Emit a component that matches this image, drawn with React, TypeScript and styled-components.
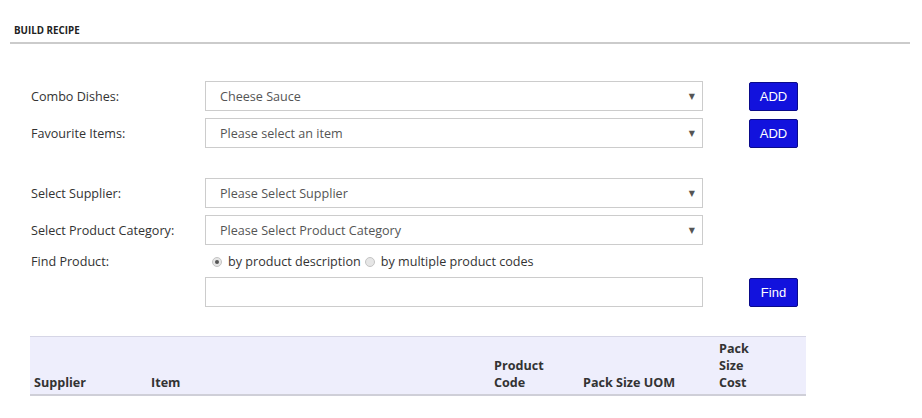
import React from 'react';
import styled, { createGlobalStyle } from 'styled-components';

const GlobalStyle = createGlobalStyle`
  body {
    margin: 0;
    background: #fff;
    font-family: "Open Sans", "Liberation Sans", sans-serif;
    color: #333;
  }
`

const Page = styled.div`
  width: 922px;
  height: 418px;
  overflow: hidden;
  padding-top: 23px;
  box-sizing: border-box;
`

const SectionHeader = styled.div`
  margin: 0 12px 0 10px;
  padding: 0 0 4px 4px;
  border-bottom: 2px solid #cbcbcb;
  font-size: 9.8px;
  font-weight: 700;
  line-height: 15px;
  color: #222;
`

const Form = styled.div`
  padding: 37px 0 0 31px;
`

const Row = styled.div<{ $gapTop?: number }>`
  display: flex;
  align-items: center;
  margin-top: ${(p) => p.$gapTop ?? 7}px;
`

const Label = styled.div`
  width: 174px;
  font-size: 12.6px;
  color: #333;
`

const SelectBox = styled.div`
  width: 498px;
  height: 30px;
  box-sizing: border-box;
  border: 1px solid #ccc;
  display: flex;
  align-items: center;
  justify-content: space-between;
  padding: 0 7px 0 14px;
  font-size: 12.6px;
  color: #555;
`

const Arrow = styled.span`
  font-size: 8px;
  color: #555;
  font-family: "DejaVu Sans", sans-serif;
`

const TextBox = styled.input`
  width: 498px;
  height: 30px;
  box-sizing: border-box;
  border: 1px solid #ccc;
  padding: 0 14px;
  font-size: 12.6px;
  font-family: inherit;
  outline: none;
`

const Button = styled.button`
  margin-left: 46px;
  width: 49px;
  height: 29px;
  box-sizing: border-box;
  background: #1212dd;
  border: 1px solid #0a0a8a;
  border-radius: 2px;
  color: #fff;
  font-family: "Liberation Sans", Arial, sans-serif;
  font-size: 13px;
  padding: 0;
`

const RadioGroup = styled.div`
  display: flex;
  align-items: center;
  font-size: 12.6px;
  color: #333;
  padding-left: 7px;
`

const RadioOption = styled.label`
  display: flex;
  align-items: center;
  gap: 6px;
  margin-right: 4px;
`

const RadioDot = styled.span<{ $checked?: boolean }>`
  width: 10px;
  height: 10px;
  box-sizing: border-box;
  border-radius: 50%;
  border: 1px solid #c4c4c4;
  background: #e6e6e6;
  display: flex;
  align-items: center;
  justify-content: center;
  &::after {
    content: '';
    width: 4px;
    height: 4px;
    border-radius: 50%;
    background: ${(p) => (p.$checked ? '#555' : 'transparent')};
  }
`

const Table = styled.table`
  margin: 29px 0 0 30px;
  width: 776px;
  border-collapse: collapse;
  table-layout: fixed;
  background: #eeeefc;
  border-top: 1px solid #d6d6e6;
  border-bottom: 2px solid #cfcfd8;
`

const Th = styled.th<{ $w: number; $wrap?: number }>`
  box-sizing: border-box;
  width: ${(p) => p.$w}px;
  text-align: left;
  vertical-align: bottom;
  font-size: 12.6px;
  font-weight: 700;
  line-height: 17px;
  color: #333;
  padding: 3px 4px 3px 4px;
  span {
    display: block;
    max-width: ${(p) => (p.$wrap ? `${p.$wrap}px` : 'none')};
  }
`

function Select({ value }: { value: string }) {
  return (
    <SelectBox>
      {value}
      <Arrow>▼</Arrow>
    </SelectBox>
  );
}

function App() {
  return (
    <Page>
      <GlobalStyle />
      <SectionHeader>BUILD RECIPE</SectionHeader>
      <Form>
        <Row $gapTop={0}>
          <Label>Combo Dishes:</Label>
          <Select value="Cheese Sauce" />
          <Button>ADD</Button>
        </Row>
        <Row>
          <Label>Favourite Items:</Label>
          <Select value="Please select an item" />
          <Button>ADD</Button>
        </Row>
        <Row $gapTop={30}>
          <Label>Select Supplier:</Label>
          <Select value="Please Select Supplier" />
        </Row>
        <Row>
          <Label>Select Product Category:</Label>
          <Select value="Please Select Product Category" />
        </Row>
        <Row $gapTop={8}>
          <Label>Find Product:</Label>
          <RadioGroup>
            <RadioOption><RadioDot $checked />by product description</RadioOption>
            <RadioOption><RadioDot />by multiple product codes</RadioOption>
          </RadioGroup>
        </Row>
        <Row $gapTop={7}>
          <Label />
          <TextBox />
          <Button>Find</Button>
        </Row>
      </Form>
      <Table>
        <thead>
          <tr>
            <Th $w={117}><span>Supplier</span></Th>
            <Th $w={343}><span>Item</span></Th>
            <Th $w={89} $wrap={60}><span>Product Code</span></Th>
            <Th $w={136}><span>Pack Size UOM</span></Th>
            <Th $w={91} $wrap={36}><span>Pack Size Cost</span></Th>
          </tr>
        </thead>
      </Table>
    </Page>
  );
}

export default App;
